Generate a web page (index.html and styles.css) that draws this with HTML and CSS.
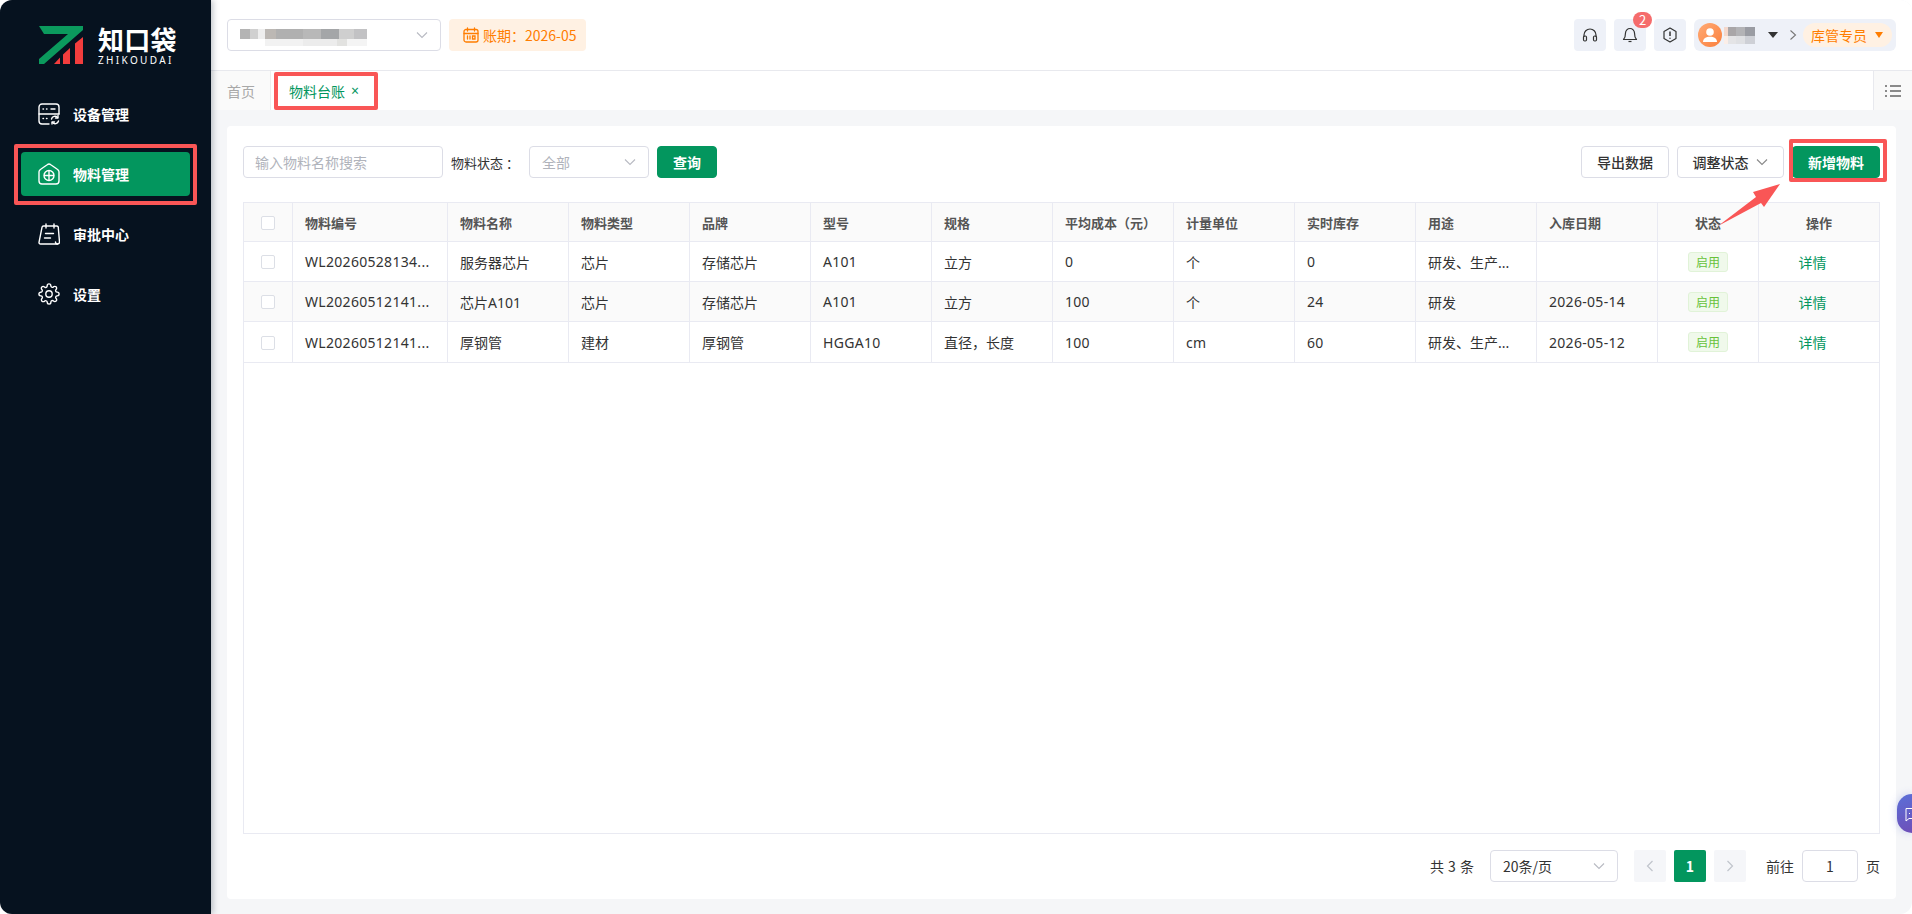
FILE: index.html
```html
<!DOCTYPE html>
<html lang="zh-CN">
<head>
    <meta charset="UTF-8">
    <title>物料台账</title>
    <link rel="stylesheet" href="styles.css">
</head>
<body>
<div class="app">
    <aside class="sidebar">
        <div class="logo">
            <svg class="logo-mark" viewBox="39 26 44 38" width="44" height="38">
                <polygon fill="#0b9a5d" points="39,26 83,26 83,30 44,64 39,64 39,59 68,34 44,34"/>
                <polygon fill="#f23d3d" points="54,64 60,57.5 60,64"/>
                <polygon fill="#f23d3d" points="63,64 63,54.5 70,48 70,64"/>
                <polygon fill="#f23d3d" points="75,64 75,43.5 83,37 83,64"/>
            </svg>
            <div class="logo-text">
                <div class="logo-cn">知口袋</div>
                <div class="logo-en">ZHIKOUDAI</div>
            </div>
        </div>
        <nav class="nav">
            <a class="nav-item">
                <svg class="nav-icon" viewBox="0 0 22 22" fill="none" stroke="#fff" stroke-width="1.4" stroke-linecap="round" stroke-linejoin="round">
                    <path d="M11 21H4a3 3 0 0 1-3-3V4a3 3 0 0 1 3-3h14a3 3 0 0 1 3 3v7"/>
                    <path d="M1 11h20"/>
                    <path d="M5 6h.5M8.5 6H9M13 6h4M5 15.5h.5M8.5 15.5H9"/>
                    <path d="M13.5 16a3.5 3.5 0 0 1 6-1.5M20.5 18a3.5 3.5 0 0 1-6 1.5"/>
                    <path d="M20 12.5v2.5h-2.5M14 21v-2h2.5"/>
                </svg>
                <span>设备管理</span>
            </a>
            <a class="nav-item active marked">
                <svg class="nav-icon" viewBox="0 0 22 22" fill="none" stroke="#fff" stroke-width="1.4" stroke-linejoin="round">
                    <path d="M9.2 1.7a3 3 0 0 1 3.6 0l6.5 4.6A3 3 0 0 1 21 8.8V18a3 3 0 0 1-3 3H4a3 3 0 0 1-3-3V8.800a3 3 0 0 1 1.700-2.500z"/>
                    <circle cx="11" cy="12.500" r="5"/>
                    <path d="M6 12.500h10M11 7.500v10"/>
                </svg>
                <span>物料管理</span>
            </a>
            <a class="nav-item">
                <svg class="nav-icon" viewBox="0 0 22 22" fill="none" stroke="#fff" stroke-width="1.400" stroke-linecap="round" stroke-linejoin="round">
                    <path d="M5.500 3h13.300a1.500 1.500 0 0 1 1.500 1.700L21.500 19a2 2 0 0 1-2 2H2.500A1.500 1.500 0 0 1 1 19.300L4 4.300A1.500 1.500 0 0 1 5.500 3z"/>
                    <path d="M8 1v4M16 1v4M7.500 10.500h8M6.500 15h6"/>
                    <path d="M19.500 21a2 2 0 0 1-2-2"/>
                </svg>
                <span>审批中心</span>
            </a>
            <a class="nav-item">
                <svg class="nav-icon" viewBox="0 0 24 24" fill="none" stroke="#fff" stroke-width="1.500" stroke-linejoin="round">
                    <circle cx="12" cy="12" r="3.500"/>
                    <path d="M19.400 15a1.650 1.650 0 0 0 .33 1.820l.06.06a2 2 0 0 1 0 2.830 2 2 0 0 1-2.830 0l-.06-.06a1.650 1.650 0 0 0-1.820-.33 1.650 1.650 0 0 0-1 1.510V21a2 2 0 0 1-2 2 2 2 0 0 1-2-2v-.09A1.650 1.650 0 0 0 9 19.400a1.650 1.650 0 0 0-1.820.33l-.06.06a2 2 0 0 1-2.830 0 2 2 0 0 1 0-2.830l.06-.06a1.650 1.650 0 0 0 .33-1.820 1.650 1.650 0 0 0-1.510-1H3a2 2 0 0 1-2-2 2 2 0 0 1 2-2h.09A1.650 1.650 0 0 0 4.600 9a1.650 1.650 0 0 0-.33-1.820l-.06-.06a2 2 0 0 1 0-2.830 2 2 0 0 1 2.830 0l.06.06a1.650 1.650 0 0 0 1.820.33H9a1.650 1.650 0 0 0 1-1.510V3a2 2 0 0 1 2-2 2 2 0 0 1 2 2v.09a1.650 1.650 0 0 0 1 1.510 1.650 1.650 0 0 0 1.820-.33l.06-.06a2 2 0 0 1 2.830 0 2 2 0 0 1 0 2.830l-.06.06a1.650 1.650 0 0 0-.33 1.820V9a1.650 1.650 0 0 0 1.510 1H21a2 2 0 0 1 2 2 2 2 0 0 1-2 2h-.09a1.650 1.650 0 0 0-1.510 1z"/>
                </svg>
                <span>设置</span>
            </a>
        </nav>
    </aside>

    <main class="main">
        <header class="topbar">
            <div class="topbar-left">
                <div class="select company-select">
                    <div class="mosaic mosaic-company"></div>
                    <svg class="chevron" viewBox="0 0 14 14"><path d="M2 4.500l5 5 5-5"/></svg>
                </div>
                <div class="period">
                    <svg class="period-icon" viewBox="0 0 16 16" fill="none" stroke="#ff7d00" stroke-width="1.300" stroke-linecap="round">
                        <rect x="1" y="2.500" width="14" height="12.500" rx="2"/>
                        <path d="M1 6.500h14M4.500 1v3M11.500 1v3M4.500 9v3M7 9v3M9.500 9h2.500v3H9.500z"/>
                    </svg>
                    <span>账期<span class="fw">：</span>2026-05</span>
                </div>
            </div>
            <div class="topbar-right">
                <button class="icon-btn">
                    <svg viewBox="0 0 16 16" width="16" height="16" fill="none" stroke="#333" stroke-width="1.200">
                        <path d="M2 10V8a6 6 0 0 1 12 0v2"/>
                        <rect x="1.500" y="9" width="3" height="5" rx="1.200"/>
                        <rect x="11.500" y="9" width="3" height="5" rx="1.200"/>
                    </svg>
                </button>
                <button class="icon-btn notice">
                    <svg viewBox="0 0 16 16" width="16" height="16" fill="none" stroke="#333" stroke-width="1.200" stroke-linejoin="round">
                        <path d="M8 1.500a4.500 4.500 0 0 0-4.500 4.500c0 3.500-1 5.500-2 6.500h13c-1-1-2-3-2-6.500A4.500 4.500 0 0 0 8 1.500z"/>
                        <path d="M6.500 14.500h3"/>
                    </svg>
                    <span class="badge">2</span>
                </button>
                <button class="icon-btn">
                    <svg viewBox="0 0 16 16" width="16" height="16" fill="none" stroke="#333" stroke-width="1.200" stroke-linejoin="round">
                        <path d="M8 1l6 3.500v7L8 15l-6-3.500v-7z"/>
                        <path d="M8 4.500v4.500M8 10.800v1" stroke-width="1.500"/>
                    </svg>
                </button>
                <div class="user">
                    <span class="avatar">
                        <svg viewBox="0 0 24 24" width="24" height="24" fill="#fff">
                            <circle cx="12" cy="9" r="3.800"/>
                            <path d="M5 19c0-3.500 3-5.200 7-5.200s7 1.700 7 5.200z"/>
                        </svg>
                    </span>
                    <div class="mosaic mosaic-user"></div>
                    <span class="caret dark"></span>
                    <svg class="user-arrow" viewBox="0 0 8 12"><path d="M1.500 1.500L6.500 6l-5 4.500"/></svg>
                    <div class="role">库管专员<span class="caret"></span></div>
                </div>
            </div>
        </header>

        <div class="tabs">
            <div class="tab">首页</div>
            <div class="tab current marked">物料台账<span class="tab-close">×</span></div>
            <div class="tabs-more">
                <svg viewBox="0 0 16 14" width="16" height="14" fill="none" stroke="#666" stroke-width="1.500">
                    <path d="M5 2h11M5 7h11M5 12h11"/>
                    <path d="M0 2h2M0 7h2M0 12h2"/>
                </svg>
            </div>
        </div>

        <div class="content">
            <section class="card">
                <div class="toolbar">
                    <div class="filters">
                        <input class="search" type="text" placeholder="输入物料名称搜索">
                        <label class="filter-label">物料状态<span class="fw colon">：</span></label>
                        <div class="select status-select">
                            <span class="placeholder">全部</span>
                            <svg class="chevron" viewBox="0 0 14 14"><path d="M2 4.500l5 5 5-5"/></svg>
                        </div>
                        <button class="btn primary query">查询</button>
                    </div>
                    <div class="actions">
                        <button class="btn export">导出数据</button>
                        <button class="btn adjust">调整状态
                            <svg class="chevron" viewBox="0 0 14 14"><path d="M2 4.500l5 5 5-5"/></svg>
                        </button>
                        <button class="btn primary add marked">新增物料</button>
                    </div>
                </div>

                <div class="table-wrap">
                    <table class="table">
                        <colgroup>
                            <col class="col-check">
                            <col class="col-code">
                            <col span="10" class="col-std">
                            <col class="col-status">
                            <col>
                        </colgroup>
                        <thead>
                            <tr>
                                <th class="center"><span class="checkbox"></span></th>
                                <th>物料编号</th>
                                <th>物料名称</th>
                                <th>物料类型</th>
                                <th>品牌</th>
                                <th>型号</th>
                                <th>规格</th>
                                <th>平均成本<span class="fw unit">（元）</span></th>
                                <th>计量单位</th>
                                <th>实时库存</th>
                                <th>用途</th>
                                <th>入库日期</th>
                                <th class="center">状态</th>
                                <th class="center">操作</th>
                            </tr>
                        </thead>
                        <tbody>
                            <tr>
                                <td class="center"><span class="checkbox"></span></td>
                                <td class="num">WL20260528134...</td>
                                <td>服务器芯片</td>
                                <td>芯片</td>
                                <td>存储芯片</td>
                                <td class="num">A101</td>
                                <td>立方</td>
                                <td class="num">0</td>
                                <td>个</td>
                                <td class="num">0</td>
                                <td>研发、生产...</td>
                                <td></td>
                                <td class="center"><span class="tag">启用</span></td>
                                <td class="center"><a class="link">详情</a></td>
                            </tr>
                            <tr class="striped">
                                <td class="center"><span class="checkbox"></span></td>
                                <td class="num">WL20260512141...</td>
                                <td>芯片A101</td>
                                <td>芯片</td>
                                <td>存储芯片</td>
                                <td class="num">A101</td>
                                <td>立方</td>
                                <td class="num">100</td>
                                <td>个</td>
                                <td class="num">24</td>
                                <td>研发</td>
                                <td class="num">2026-05-14</td>
                                <td class="center"><span class="tag">启用</span></td>
                                <td class="center"><a class="link">详情</a></td>
                            </tr>
                            <tr>
                                <td class="center"><span class="checkbox"></span></td>
                                <td class="num">WL20260512141...</td>
                                <td>厚钢管</td>
                                <td>建材</td>
                                <td>厚钢管</td>
                                <td class="num">HGGA10</td>
                                <td>直径<span class="fw">，</span>长度</td>
                                <td class="num">100</td>
                                <td class="num">cm</td>
                                <td class="num">60</td>
                                <td>研发、生产...</td>
                                <td class="num">2026-05-12</td>
                                <td class="center"><span class="tag">启用</span></td>
                                <td class="center"><a class="link">详情</a></td>
                            </tr>
                        </tbody>
                    </table>
                </div>

                <div class="pager">
                    <span class="total">共 3 条</span>
                    <div class="select size-select">
                        <span>20条/页</span>
                        <svg class="chevron" viewBox="0 0 14 14"><path d="M2 4.500l5 5 5-5"/></svg>
                    </div>
                    <button class="page-btn">
                        <svg viewBox="0 0 8 12" width="8" height="12" fill="none" stroke="#c0c4cc" stroke-width="1.200"><path d="M6.500 1L1.500 6l5 5"/></svg>
                    </button>
                    <button class="page-btn current">1</button>
                    <button class="page-btn">
                        <svg viewBox="0 0 8 12" width="8" height="12" fill="none" stroke="#c0c4cc" stroke-width="1.200"><path d="M1.500 1l5 5-5 5"/></svg>
                    </button>
                    <span class="goto">前往</span>
                    <div class="page-input">1</div>
                    <span>页</span>
                </div>
            </section>
        </div>
    </main>

    <!-- annotation arrow drawn over the screenshot -->
    <svg class="note-arrow" viewBox="1716 182 66 46" width="66" height="46">
        <polygon fill="#f95656" points="1718,226 1756,197 1753,192 1780,184 1764,207 1761,203"/>
    </svg>

    <div class="chat-float">
        <svg viewBox="0 0 16 16" width="16" height="16" fill="none" stroke="#fff" stroke-width="1" stroke-linejoin="round">
            <path d="M1 2.500h14v10H4l-3 2.500z"/>
            <path d="M4 7.500h1M7 7.500h1"/>
        </svg>
    </div>
</div>
</body>
</html>
```

FILE: styles.css
```css
* {
    box-sizing: border-box;
}

html,
body {
    margin: 0;
    height: 100%;
    background: #fff;
    overflow: hidden;
}

body {
    font-family: "Noto Sans CJK SC", "Noto Sans", sans-serif;
    font-size: 13px;
    color: #333;
}

button,
input {
    font-family: inherit;
}

/* full-width punctuation sits centred in the reference */
.fw {
    font-family: "Noto Sans CJK TC", sans-serif;
}

.colon {
    text-spacing-trim: space-all;
    margin-left: 3px;
}

.unit {
    text-spacing-trim: space-all;
}

.app {
    position: relative;
    display: flex;
    height: 914px;
    border-radius: 12px;
    overflow: hidden;
}

/* sidebar */
.sidebar {
    width: 211px;
    flex-shrink: 0;
    background: #06121f;
    box-shadow: 2px 0 6px rgba(0, 21, 41, 0.25);
    z-index: 2;
}

.logo {
    display: flex;
    gap: 15px;
    height: 92px;
    padding: 26px 0 0 39px;
}

.logo-mark {
    display: block;
}

.logo-text {
    color: #fff;
}

.logo-cn {
    font-size: 26px;
    font-weight: 700;
    line-height: 26px;
    letter-spacing: 0.3px;
}

.logo-en {
    font-family: "Noto Sans", sans-serif;
    font-size: 10px;
    line-height: 12px;
    margin-top: 2px;
    letter-spacing: 2.35px;
}

.nav {
    display: flex;
    flex-direction: column;
    gap: 16px;
    padding: 0 21px;
}

.nav-item {
    display: flex;
    align-items: center;
    gap: 13px;
    height: 44px;
    padding-left: 17px;
    border-radius: 4px;
    color: #fff;
    font-size: 14px;
    font-weight: 700;
}

.nav-item.active {
    background: #03965e;
}

.nav-icon {
    width: 22px;
    height: 22px;
}

/* red boxes added on top of the screenshot */
.marked {
    position: relative;
}

.marked::after {
    content: "";
    position: absolute;
    border: 4px solid #f95656;
    border-radius: 2px;
    pointer-events: none;
}

.nav-item.marked::after {
    inset: -8px -7px -9px -7px;
}

.tab.marked::after {
    inset: 1px 0 0 0;
}

.btn.marked::after {
    inset: -8px -8px -5px -4px;
}

/* main column */
.main {
    flex: 1;
    min-width: 0;
    display: flex;
    flex-direction: column;
    background: #f5f6f8;
}

.topbar {
    display: flex;
    align-items: center;
    justify-content: space-between;
    height: 71px;
    padding: 0 16px;
    background: #fff;
    border-bottom: 1px solid #e8e9ee;
}

.topbar-left,
.topbar-right {
    display: flex;
    align-items: center;
}

.topbar-left {
    gap: 8px;
}

.topbar-right {
    gap: 8px;
}

.select {
    position: relative;
    display: flex;
    align-items: center;
    height: 32px;
    padding-left: 12px;
    background: #fff;
    border: 1px solid #dcdde6;
    border-radius: 4px;
    font-size: 14px;
}

.chevron {
    width: 14px;
    height: 14px;
    fill: none;
    stroke: #b8bac2;
    stroke-width: 1.1;
}

.select .chevron {
    position: absolute;
    right: 11px;
    top: 8px;
}

.adjust .chevron {
    stroke: #888;
}

.company-select {
    width: 214px;
}

.mosaic {
    flex-shrink: 0;
}

.mosaic-company {
    width: 127px;
    height: 17px;
    margin-top: 5px;
    background:
        linear-gradient(90deg, #b4b4b4 0 8%, #d0d0d0 8% 14%, #eee 14% 20%, #bcb8b4 20% 28%, #b0b0b0 28% 50%, #b8b8b8 50% 64%, #a4a6a8 64% 78%, #cfcfcf 78% 90%, #c2c2c4 90% 100%) 0 0 / 100% 10px no-repeat,
        linear-gradient(90deg, #fff 0 20%, #f2f2f2 20% 50%, #ececec 50% 76%, #e2e2e0 76% 84%, #f4f4f4 84% 100%) 0 10px / 100% 7px no-repeat;
}

.mosaic-user {
    width: 31px;
    height: 17px;
    margin-left: 2px;
    background:
        linear-gradient(90deg, #f4d8cc 0 12%, #a9a6a8 12% 40%, #b3b3b6 40% 68%, #9a9ca3 68% 100%) 0 0 / 100% 9px no-repeat,
        linear-gradient(90deg, #fbeee8 0 12%, #e4e4e6 12% 40%, #dfe0e3 40% 68%, #ced0d6 68% 100%) 0 9px / 100% 8px no-repeat;
}

.period {
    display: flex;
    align-items: center;
    gap: 4px;
    height: 32px;
    padding: 0 10px 0 14px;
    background: #fff1e3;
    border-radius: 4px;
    color: #ff7d00;
    font-size: 14px;
}

.period-icon {
    width: 16px;
    height: 16px;
}

.icon-btn {
    position: relative;
    display: flex;
    align-items: center;
    justify-content: center;
    width: 32px;
    height: 32px;
    padding: 0;
    border: none;
    border-radius: 4px;
    background: #eef1f8;
}

.badge {
    position: absolute;
    top: -7px;
    right: -6px;
    width: 19px;
    height: 16px;
    border-radius: 8px;
    background: #f56c6c;
    color: #fff;
    font-size: 13px;
    line-height: 16px;
    text-align: center;
}

.user {
    display: flex;
    align-items: center;
    width: 202px;
    height: 32px;
    padding-left: 4px;
    border-radius: 6px;
    background: #eef1f8;
}

.avatar {
    display: block;
    width: 24px;
    height: 24px;
    border-radius: 50%;
    background: linear-gradient(135deg, #ffab76, #fb7f3c);
}

.caret {
    display: inline-block;
    width: 0;
    height: 0;
    border-left: 4.5px solid transparent;
    border-right: 4.5px solid transparent;
    border-top: 6px solid #ff7d00;
    margin-left: 8px;
}

.caret.dark {
    border-left-width: 5px;
    border-right-width: 5px;
    border-top-color: #333;
    margin-left: 13px;
}

.user-arrow {
    width: 8px;
    height: 12px;
    margin-left: 11px;
    fill: none;
    stroke: #777;
    stroke-width: 1.1;
}

.role {
    display: flex;
    align-items: center;
    height: 24px;
    margin-left: 6px;
    padding: 0 9px 0 8px;
    border-radius: 12px;
    background: #fff1e3;
    color: #ff7d00;
    font-size: 14px;
}

/* tab strip */
.tabs {
    display: flex;
    height: 39px;
    background: #fff;
}

.tab {
    display: flex;
    align-items: center;
    height: 39px;
    font-size: 14px;
}

.tab:first-child {
    width: 60px;
    padding-left: 16px;
    color: #a8a8a8;
    background: #fafafa;
    border-right: 1px solid #eee;
}

.tab.current {
    width: 104px;
    margin-left: 3px;
    padding-left: 15px;
    color: #03965e;
}

.tab-close {
    margin-left: 6px;
    font-family: "Noto Sans", sans-serif;
    font-size: 14px;
}

.tabs-more {
    display: flex;
    align-items: center;
    justify-content: center;
    width: 39px;
    margin-left: auto;
    background: #f9f9f9;
    border-left: 1px solid #e8e9ee;
}

/* page body */
.content {
    flex: 1;
    padding: 16px 16px 15px;
}

.card {
    height: 773px;
    padding: 20px 16px;
    border-radius: 4px;
    background: #fff;
}

.toolbar {
    display: flex;
    justify-content: space-between;
    height: 32px;
    margin-bottom: 24px;
}

.filters,
.actions {
    display: flex;
    align-items: center;
}

.search {
    width: 200px;
    height: 32px;
    padding: 0 11px;
    border: 1px solid #dcdde6;
    border-radius: 4px;
    font-size: 14px;
    outline: none;
}

.search::placeholder,
.placeholder {
    color: #b0b3bb;
}

.filter-label {
    margin-left: 8px;
    width: 78px;
    color: #333;
    white-space: nowrap;
}

.status-select {
    width: 120px;
}

.btn {
    height: 32px;
    padding: 0;
    border: 1px solid #dcdde6;
    border-radius: 4px;
    background: #fff;
    color: #333;
    font-size: 14px;
    font-weight: 500;
}

.btn.primary {
    background: #03965e;
    border-color: #03965e;
    color: #fff;
    font-weight: 700;
}

.query {
    width: 60px;
    margin-left: 8px;
}

.export {
    width: 88px;
}

.adjust {
    display: flex;
    align-items: center;
    justify-content: center;
    gap: 6px;
    width: 107px;
    margin-left: 8px;
}

.add {
    width: 88px;
    margin-left: 8px;
}

/* table */
.table-wrap {
    height: 632px;
    border: 1px solid #e9eaf2;
}

.table {
    width: 100%;
    table-layout: fixed;
    border-collapse: separate;
    border-spacing: 0;
}

.col-check {
    width: 49px;
}

.col-code {
    width: 155px;
}

.col-std {
    width: 121px;
}

.col-status {
    width: 101px;
}

.table th,
.table td {
    height: 40px;
    padding: 0 12px;
    border-right: 1px solid #e9eaf2;
    border-bottom: 1px solid #e9eaf2;
    text-align: left;
    white-space: nowrap;
    overflow: hidden;
}

.table th:last-child,
.table td:last-child {
    border-right: none;
}

.table th {
    height: 39px;
    background: #fafafa;
    color: #555;
    font-weight: 700;
}

.table td {
    font-family: "Noto Sans", "Noto Sans CJK SC", sans-serif;
    font-size: 14px;
}

.table td.num {
    letter-spacing: 0.3px;
}

.table tbody tr:last-child td {
    height: 41px;
}

.striped td {
    background: #fafafa;
}

.table .center {
    text-align: center;
}

.checkbox {
    display: inline-block;
    width: 14px;
    height: 14px;
    margin-top: 5px;
    background: #fff;
    border: 1px solid #dcdfe6;
    border-radius: 2px;
}

.tag {
    display: inline-block;
    width: 40px;
    height: 20px;
    background: #f0f9eb;
    border: 1px solid #e1f3d8;
    border-radius: 3px;
    color: #67c23a;
    font-family: "Noto Sans CJK SC", sans-serif;
    font-size: 12px;
    line-height: 18px;
    text-align: center;
}

.link {
    display: inline-block;
    margin-right: 13px;
    color: #03965e;
    font-family: "Noto Sans CJK SC", sans-serif;
    font-size: 14px;
}

/* pagination */
.pager {
    display: flex;
    align-items: center;
    justify-content: flex-end;
    margin-top: 16px;
    height: 32px;
    font-size: 14px;
}

.total {
    margin-right: 16px;
    word-spacing: 1px;
}

.size-select {
    width: 128px;
    margin-right: 16px;
}

.page-btn {
    display: flex;
    align-items: center;
    justify-content: center;
    width: 32px;
    height: 32px;
    margin-right: 8px;
    padding: 0;
    border: none;
    border-radius: 2px;
    background: #f5f6f9;
    font-size: 14px;
    font-weight: 700;
}

.page-btn.current {
    background: #03965e;
    color: #fff;
}

.goto {
    margin-left: 12px;
}

.page-input {
    width: 56px;
    height: 32px;
    margin: 0 8px;
    border: 1px solid #dcdde6;
    border-radius: 4px;
    line-height: 30px;
    text-align: center;
}

/* things floating over the page */
.note-arrow {
    position: absolute;
    left: 1716px;
    top: 182px;
    pointer-events: none;
    z-index: 3;
}

.chat-float {
    position: absolute;
    right: 0;
    top: 794px;
    display: flex;
    align-items: center;
    width: 15px;
    height: 39px;
    padding-left: 8px;
    border-radius: 16px 0 0 16px;
    background: linear-gradient(160deg, #5b70d8, #6e4fb8);
    box-shadow: 0 0 8px rgba(91, 112, 216, 0.3);
    overflow: hidden;
}

.chat-float svg {
    flex-shrink: 0;
}
```
